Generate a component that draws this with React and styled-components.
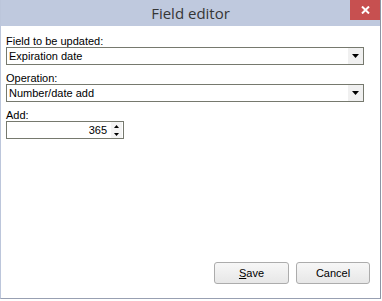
import React from "react";
import styled, { createGlobalStyle } from "styled-components";

const Global = createGlobalStyle`
  html, body { margin: 0; padding: 0; background: #ffffff; }
  body { font-family: "Liberation Sans", Arial, sans-serif; font-size: 11px; color: #000; }
`;

const Window = styled.div`
  box-sizing: border-box;
  width: 381px;
  height: 299px;
  display: flex;
  flex-direction: column;
  border-left: 1px solid #bcc6db;
  border-right: 1px solid #8d94a4;
  border-bottom: 1px solid #98a0b2;
  background: #ffffff;
`;

const TitleBar = styled.div`
  height: 26px;
  flex: none;
  background: #bfc9de;
  display: flex;
  align-items: flex-start;
  justify-content: center;
  position: relative;
`;

const Title = styled.div`
  font-family: "Open Sans", "Noto Sans", sans-serif;
  font-size: 15px;
  line-height: 26px;
  color: #363636;
`;

const CloseButton = styled.div`
  position: absolute;
  right: 0;
  top: 0;
  width: 30px;
  height: 20px;
  background: #c75050;
  display: flex;
  align-items: center;
  justify-content: center;
`;

const Body = styled.div`
  flex: 1;
  padding: 4px 16px 0 5px;
  display: flex;
  flex-direction: column;
  gap: 2px;
`;

const Group = styled.div`
  display: flex;
  flex-direction: column;
`;

const Label = styled.div`
  padding-top: 5px;
  line-height: 12px;
  height: 12px;
`;

const Select = styled.div`
  box-sizing: border-box;
  height: 18px;
  width: 100%;
  border: 1px solid #76796e;
  display: flex;
  align-items: center;
  padding-left: 2px;
  line-height: 16px;
`;

const SelectText = styled.span`
  flex: 1;
`;

const DropButton = styled.div`
  width: 15px;
  height: 16px;
  background: #f0f0f0;
  display: flex;
  align-items: center;
  justify-content: center;
`;

const SpinBox = styled.div`
  box-sizing: border-box;
  height: 18px;
  width: 118px;
  border: 1px solid #76796e;
  display: flex;
  align-items: center;
`;

const SpinValue = styled.span`
  flex: 1;
  text-align: right;
  padding-right: 4px;
  line-height: 16px;
`;

const SpinButtons = styled.div`
  width: 11px;
  height: 16px;
  margin-right: 1px;
  display: flex;
  flex-direction: column;
  align-items: center;
  justify-content: space-around;
  background: #f4f4f4;
`;

const Footer = styled.div`
  flex: none;
  display: flex;
  justify-content: flex-end;
  gap: 7px;
  padding: 0 10px 14px 0;
`;

const Button = styled.div`
  box-sizing: border-box;
  width: ${(p) => p.$w}px;
  height: 22px;
  border: 1px solid #acacac;
  border-radius: 3px;
  background: linear-gradient(#f7f7f7, #e7e7e7);
  display: flex;
  align-items: center;
  justify-content: center;
  line-height: 20px;
`;

const Underline = styled.span`
  text-decoration: underline;
`;

const Arrow = ({ up }) => (
  <svg width="7" height="4" viewBox="0 0 7 4">
    {up ? <polygon points="0,4 7,4 3.5,0" fill="#000" /> : <polygon points="0,0 7,0 3.5,4" fill="#000" />}
  </svg>
);

const SmallArrow = ({ up }) => (
  <svg width="5" height="3" viewBox="0 0 5 3">
    {up ? <polygon points="0,3 5,3 2.5,0" fill="#000" /> : <polygon points="0,0 5,0 2.5,3" fill="#000" />}
  </svg>
);

export default function App() {
  return (
    <>
      <Global />
      <Window>
        <TitleBar>
          <Title>Field editor</Title>
          <CloseButton>
            <svg width="9" height="8" viewBox="0 0 9 8">
              <path d="M1 0.5 L8 7.5 M8 0.5 L1 7.5" stroke="#fff" strokeWidth="2" />
            </svg>
          </CloseButton>
        </TitleBar>
        <Body>
          <Group>
            <Label>Field to be updated:</Label>
            <Select>
              <SelectText>Expiration date</SelectText>
              <DropButton><Arrow /></DropButton>
            </Select>
          </Group>
          <Group>
            <Label>Operation:</Label>
            <Select>
              <SelectText>Number/date add</SelectText>
              <DropButton><Arrow /></DropButton>
            </Select>
          </Group>
          <Group>
            <Label>Add:</Label>
            <SpinBox>
              <SpinValue>365</SpinValue>
              <SpinButtons>
                <SmallArrow up />
                <SmallArrow />
              </SpinButtons>
            </SpinBox>
          </Group>
        </Body>
        <Footer>
          <Button $w={75}><span><Underline>S</Underline>ave</span></Button>
          <Button $w={74}>Cancel</Button>
        </Footer>
      </Window>
    </>
  );
}
